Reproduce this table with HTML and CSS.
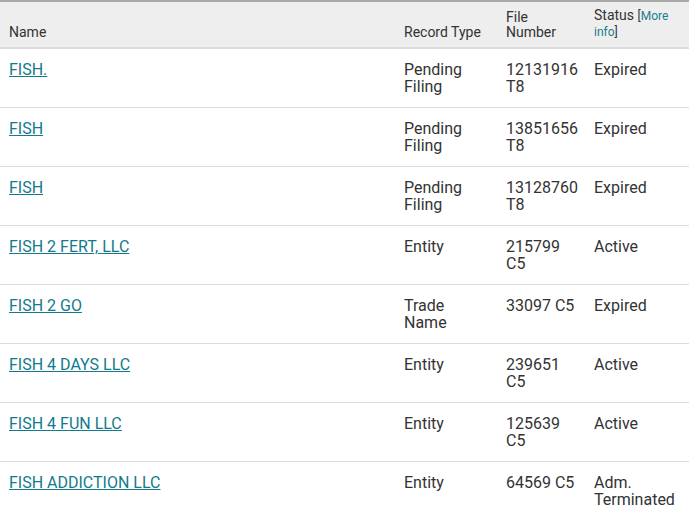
FILE: index.html
```html
<!DOCTYPE html>
<html>
<head>
<meta charset="utf-8">
<link rel="stylesheet" href="styles.css">
</head>
<body>
<table class="results">
  <colgroup>
    <col class="c-name"><col class="c-type"><col class="c-num"><col class="c-status">
  </colgroup>
  <thead>
    <tr>
      <th>Name</th>
      <th>Record Type</th>
      <th>File Number</th>
      <th>Status <span class="more">[<a href="#">More info</a>]</span></th>
    </tr>
  </thead>
  <tbody>
    <tr><td><a href="#">FISH.</a></td><td>Pending Filing</td><td>12131916 T8</td><td>Expired</td></tr>
    <tr><td><a href="#">FISH</a></td><td>Pending Filing</td><td>13851656 T8</td><td>Expired</td></tr>
    <tr><td><a href="#">FISH</a></td><td>Pending Filing</td><td>13128760 T8</td><td>Expired</td></tr>
    <tr><td><a href="#">FISH 2 FERT, LLC</a></td><td>Entity</td><td>215799 C5</td><td>Active</td></tr>
    <tr><td><a href="#">FISH 2 GO</a></td><td>Trade Name</td><td>33097 C5</td><td>Expired</td></tr>
    <tr><td><a href="#">FISH 4 DAYS LLC</a></td><td>Entity</td><td>239651 C5</td><td>Active</td></tr>
    <tr><td><a href="#">FISH 4 FUN LLC</a></td><td>Entity</td><td>125639 C5</td><td>Active</td></tr>
    <tr><td><a href="#">FISH ADDICTION LLC</a></td><td>Entity</td><td>64569 C5</td><td>Adm. Terminated</td></tr>
  </tbody>
</table>
</body>
</html>
```
FILE: styles.css
```css
html, body {
  margin: 0;
  padding: 0;
  background: #fff;
}
body {
  font-family: Roboto, "Liberation Sans", sans-serif;
  color: #333;
}
.results {
  width: 689px;
  border-collapse: collapse;
  table-layout: fixed;
  border-top: 2px solid #aaa;
}
.c-name { width: 395px; }
.c-type { width: 102px; }
.c-num { width: 88px; }
.c-status { width: 104px; }
.results th {
  background: #eee;
  font-weight: normal;
  font-size: 14px;
  line-height: 15px;
  text-align: left;
  vertical-align: bottom;
  padding: 6px 7px 7px 9px;
  border-bottom: 2px solid #ddd;
  color: #333;
}
.more {
  font-size: 12px;
}
.more a {
  color: #1a7f8e;
  text-decoration: none;
}
.results td {
  font-size: 16px;
  line-height: 17px;
  vertical-align: top;
  padding: 12px 7px 12px 9px;
  border-bottom: 1px solid #ddd;
}
.results tbody tr:last-child td {
  border-bottom: none;
}
.results td a {
  color: #117a8b;
  text-decoration: underline;
}
```
